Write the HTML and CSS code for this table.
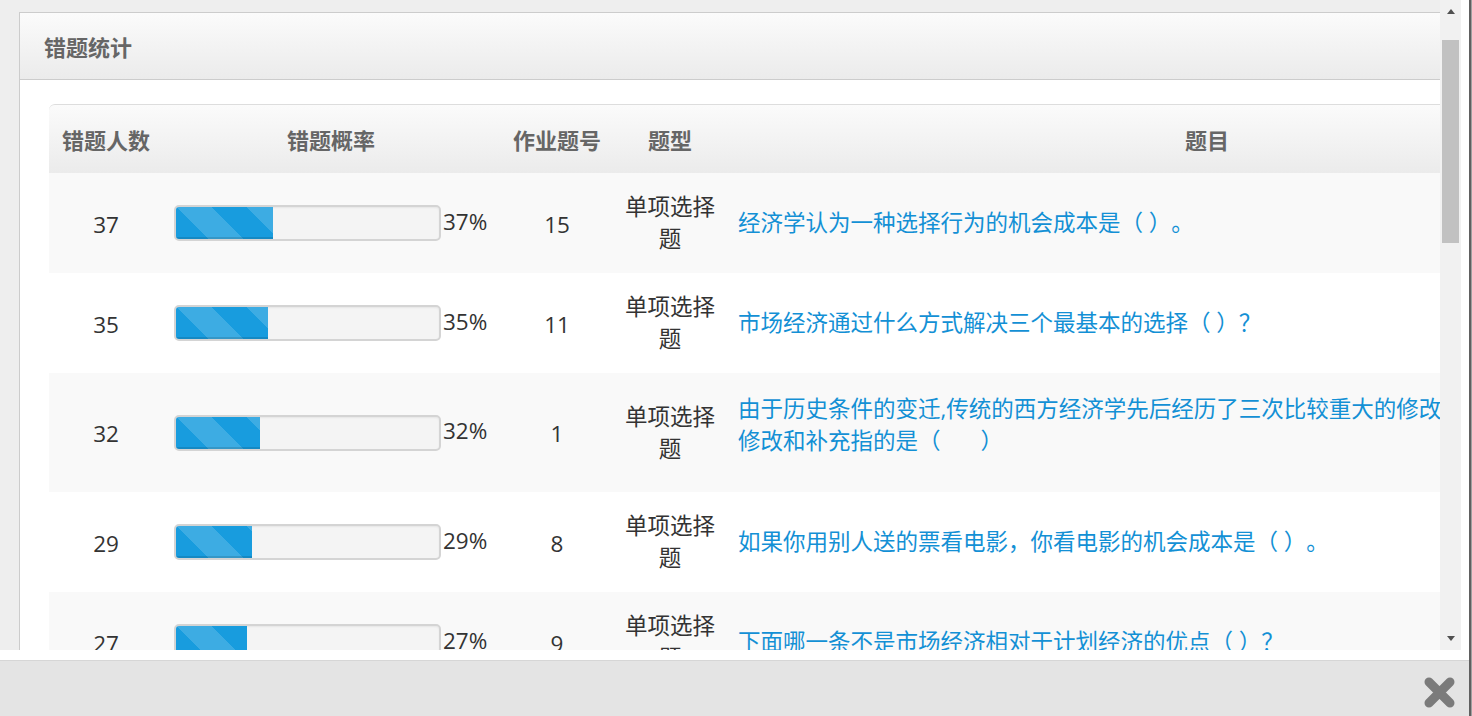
FILE: index.html
```html
<!DOCTYPE html>
<html lang="zh-CN">
<head>
<meta charset="utf-8">
<title>错题统计</title>
<link rel="stylesheet" href="styles.css">
</head>
<body>
<div class="window">
  <div class="main">
    <div class="frame">
      <div class="viewport">
        <div class="panel">
          <div class="panel-head">错题统计</div>
          <div class="panel-body">
            <table class="stats">
              <colgroup>
                <col class="c-count"><col class="c-rate"><col class="c-no"><col class="c-type"><col class="c-title">
              </colgroup>
              <thead>
                <tr><th>错题人数</th><th>错题概率</th><th>作业题号</th><th>题型</th><th>题目</th></tr>
              </thead>
              <tbody>
                <tr>
                  <td class="num">37</td>
                  <td class="rate"><div class="rate-wrap"><div class="progress"><div class="bar" style="width:37%"></div></div><span class="pct">37%</span></div></td>
                  <td class="num">15</td>
                  <td class="type">单项选择题</td>
                  <td class="title"><a class="q">经济学认为一种选择行为的机会成本是（ ）。</a></td>
                </tr>
                <tr>
                  <td class="num">35</td>
                  <td class="rate"><div class="rate-wrap"><div class="progress"><div class="bar" style="width:35%"></div></div><span class="pct">35%</span></div></td>
                  <td class="num">11</td>
                  <td class="type">单项选择题</td>
                  <td class="title"><a class="q">市场经济通过什么方式解决三个最基本的选择（ ）？</a></td>
                </tr>
                <tr class="tall">
                  <td class="num">32</td>
                  <td class="rate"><div class="rate-wrap"><div class="progress"><div class="bar" style="width:32%"></div></div><span class="pct">32%</span></div></td>
                  <td class="num">1</td>
                  <td class="type">单项选择题</td>
                  <td class="title"><a class="q">由于历史条件的变迁,传统的西方经济学先后经历了三次比较重大的修改，这三次<br>修改和补充指的是（　&nbsp;&nbsp;&nbsp;）</a></td>
                </tr>
                <tr>
                  <td class="num">29</td>
                  <td class="rate"><div class="rate-wrap"><div class="progress"><div class="bar" style="width:29%"></div></div><span class="pct">29%</span></div></td>
                  <td class="num">8</td>
                  <td class="type">单项选择题</td>
                  <td class="title"><a class="q">如果你用别人送的票看电影，你看电影的机会成本是（ ）。</a></td>
                </tr>
                <tr>
                  <td class="num">27</td>
                  <td class="rate"><div class="rate-wrap"><div class="progress"><div class="bar" style="width:27%"></div></div><span class="pct">27%</span></div></td>
                  <td class="num">9</td>
                  <td class="type">单项选择题</td>
                  <td class="title"><a class="q">下面哪一条不是市场经济相对于计划经济的优点（ ）？</a></td>
                </tr>
              </tbody>
            </table>
          </div>
        </div>
      </div>
      <div class="scrollbar">
        <div class="sb-btn"><span class="arrow-up"></span></div>
        <div class="sb-track"><div class="sb-thumb"></div></div>
        <div class="sb-btn"><span class="arrow-down"></span></div>
      </div>
      <div class="side-gap"></div>
    </div>
    <div class="gap"></div>
    <div class="footer">
      <svg class="close" width="33" height="33" viewBox="0 0 33 33" aria-label="关闭">
        <path d="M6 6 L27 27 M27 6 L6 27" stroke="#7b7b7b" stroke-width="9" stroke-linecap="round" fill="none"/>
      </svg>
    </div>
  </div>
  <div class="edge"></div>
</div>
</body>
</html>
```

FILE: styles.css
```css
html, body {
  margin: 0;
  height: 716px;
  overflow: hidden;
}
body {
  background: #eeeeee;
  font-family: "Open Sans", "Noto Sans CJK SC", sans-serif;
  font-size: 22.5px;
  color: #333333;
  text-spacing-trim: space-all;
}
.window {
  display: flex;
  height: 716px;
}
.main {
  width: 1469px;
  display: flex;
  flex-direction: column;
  background: #ffffff;
}
.frame {
  display: flex;
  height: 650px;
}
.viewport {
  width: 1440px;
  height: 650px;
  overflow: hidden;
  background: #eeeeee;
  padding: 12px 0 0 19px;
  box-sizing: border-box;
}
.panel {
  width: 1700px;
  border: 1px solid #cccccc;
  background: #ffffff;
}
.panel-head {
  height: 66px;
  line-height: 66px;
  padding-left: 24px;
  border-bottom: 1px solid #cccccc;
  background: linear-gradient(#fbfbfb, #ebebeb);
  font-family: "Noto Sans CJK SC", sans-serif;
  font-weight: bold;
  font-size: 22px;
  color: #666666;
}
.panel-body {
  padding: 24px 29px 0;
}
.stats {
  border-collapse: separate;
  border-spacing: 0;
  table-layout: fixed;
  width: 1640px;
}
.c-count { width: 114px; }
.c-rate { width: 336px; }
.c-no { width: 116px; }
.c-type { width: 110px; }
.c-title { width: 964px; }
.stats th {
  height: 69px;
  padding: 0 4px;
  box-sizing: border-box;
  border-top: 1px solid #dddddd;
  background: linear-gradient(#fbfbfb, #ebebeb);
  font-family: "Noto Sans CJK SC", sans-serif;
  font-weight: bold;
  font-size: 22px;
  color: #666666;
  text-align: center;
  vertical-align: middle;
}
.stats th:first-child {
  border-top-left-radius: 6px;
}
.stats td {
  height: 100px;
  padding: 0 8px;
  box-sizing: border-box;
  line-height: 32px;
  vertical-align: middle;
  text-align: center;
}
.stats td.num {
  padding-top: 3px;
}
.stats tbody tr:nth-child(odd) td {
  background: #f9f9f9;
}
.stats tbody tr.tall td {
  height: 119px;
}
.stats td.rate {
  padding: 0 0 0 11px;
  text-align: left;
}
.rate-wrap {
  display: flex;
  align-items: center;
}
.progress {
  width: 267px;
  height: 36px;
  box-sizing: border-box;
  border: 2px solid #d4d4d4;
  border-radius: 5px;
  background: #f4f4f4;
  box-shadow: inset 0 1px 2px rgba(0, 0, 0, 0.06);
  overflow: hidden;
}
.bar {
  height: 100%;
  background-color: #189cde;
  background-image: linear-gradient(45deg,
    rgba(255, 255, 255, 0.16) 25%, transparent 25%,
    transparent 50%, rgba(255, 255, 255, 0.16) 50%,
    rgba(255, 255, 255, 0.16) 75%, transparent 75%, transparent);
  background-size: 70px 70px;
  box-shadow: inset 0 -2px 0 rgba(0, 0, 0, 0.12);
}
.pct {
  margin-left: 2px;
  margin-top: -3px;
}
.stats td.type {
  padding: 0 8px;
}
.stats td.title {
  padding: 0 8px 0 13px;
  text-align: left;
}
.stats tr.tall td.title {
  padding-top: 20px;
  padding-bottom: 35px;
}
.q {
  color: #1390d5;
  text-decoration: none;
}
.scrollbar {
  width: 21px;
  background: #f1f1f1;
  display: flex;
  flex-direction: column;
}
.sb-btn {
  height: 23px;
  display: flex;
  align-items: center;
  justify-content: center;
}
.arrow-up {
  width: 0;
  height: 0;
  border-left: 4.5px solid transparent;
  border-right: 4.5px solid transparent;
  border-bottom: 5px solid #505050;
}
.arrow-down {
  width: 0;
  height: 0;
  border-left: 4.5px solid transparent;
  border-right: 4.5px solid transparent;
  border-top: 5px solid #505050;
}
.sb-track {
  flex: 1;
  padding: 17px 2px 0;
}
.sb-thumb {
  height: 203px;
  background: #c1c1c1;
}
.side-gap {
  width: 8px;
  background: #ffffff;
}
.gap {
  height: 10px;
  background: #ffffff;
}
.footer {
  flex: 1;
  border-top: 1px solid #d6d6d6;
  background: #e4e4e4;
  display: flex;
  justify-content: flex-end;
  align-items: flex-start;
  padding: 15px 13px 0 0;
}
.edge {
  width: 1px;
  border-left: 2px solid #606060;
  background: #a0a0a0;
}
```
